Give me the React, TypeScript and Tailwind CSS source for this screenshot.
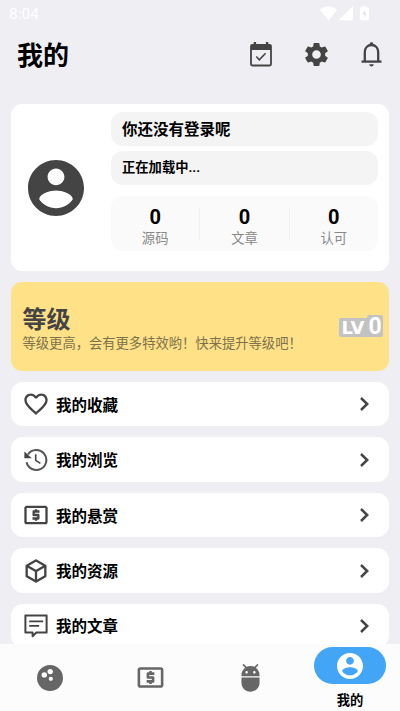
import type { ReactNode } from "react"
import { MdAdb, MdFavoriteBorder, MdOutlineLocalAtm, MdSettings } from "react-icons/md"

function AccountIcon({ className }: { className: string }) {
  return (
    <svg viewBox="2 2 20 20" fill="currentColor" className={className}>
      <path d="M12 2C6.48 2 2 6.48 2 12s4.48 10 10 10 10-4.48 10-10S17.52 2 12 2zm0 3c1.66 0 3 1.34 3 3s-1.34 3-3 3-3-1.34-3-3 1.34-3 3-3zm0 14.2c-2.5 0-4.71-1.28-6-3.22.03-1.99 4-3.08 6-3.08 1.99 0 5.97 1.09 6 3.08-1.29 1.94-3.5 3.22-6 3.22z" />
    </svg>
  )
}

function CalendarIcon() {
  return (
    <svg viewBox="0 0 22 25" className="h-[25px] w-[22px]" fill="none" stroke="currentColor">
      <path d="M4.9 0v4M17.1 0v4" strokeWidth="2.4" />
      <rect x="1" y="3" width="20" height="20.5" rx="1.2" strokeWidth="1.8" />
      <path d="M1 3h20v5H1z" fill="currentColor" stroke="none" />
      <path d="M6.3 14.6l3 3.2 6.3-6.6" strokeWidth="1.5" />
    </svg>
  )
}

function BellIcon() {
  return (
    <svg viewBox="0 0 21 25" className="h-[25px] w-[21px]" fill="none" stroke="currentColor" strokeWidth="2.3">
      <path d="M3.8 19.5V10.2C3.8 6 6.6 3 10.5 3s6.7 3 6.7 7.2v9.3" />
      <path d="M.5 19.6h20" />
      <path d="M8.8 3V1.6q0-1.4 1.7-1.4t1.7 1.4V3zM8.2 22.2h4.6q-.4 2.3-2.3 2.3t-2.3-2.3z" fill="currentColor" stroke="none" />
    </svg>
  )
}

function HistoryIcon() {
  return (
    <svg viewBox="0 0 24 24" className="size-6" fill="none" stroke="currentColor" strokeWidth="2.1">
      <path d="M2.6 14.2A10 10 0 1 0 4.1 6.3" className="opacity-90" />
      <path d="M.4 3.4v6.8h7.4z" fill="currentColor" stroke="none" />
      <path d="M11.7 6.3v6l4.7 3" strokeWidth="1.6" />
    </svg>
  )
}

function CubeIcon() {
  return (
    <svg viewBox="0 0 24 24" fill="currentColor" className="size-[28px]">
      <path d="M21 16.5c0 .38-.21.71-.53.88l-7.9 4.44c-.16.12-.36.18-.57.18s-.41-.06-.57-.18l-7.9-4.44A.991.991 0 0 1 3 16.5v-9c0-.38.21-.71.53-.88l7.9-4.44c.16-.12.36-.18.57-.18s.41.06.57.18l7.9 4.44c.32.17.53.5.53.88v9M12 4.15 6.04 7.5 12 10.85l5.96-3.35L12 4.15M5 15.91l6 3.38v-6.71L5 9.21v6.7m14 0v-6.7l-6 3.37v6.71l6-3.38Z" />
    </svg>
  )
}

function ArticleIcon() {
  return (
    <svg viewBox="0 0 24 24" className="size-6" fill="none" stroke="currentColor" strokeWidth="2">
      <path d="M1.4 1.6h21.2v17H12.4l-3.8 3.6v-3.6H1.4z" strokeLinejoin="round" />
      <path d="M5.2 7.4h14M5.2 11.8h10" strokeWidth="1.8" />
    </svg>
  )
}

function BowlingIcon() {
  return (
    <svg viewBox="0 0 26 26" className="size-[26px]">
      <circle cx="13" cy="13" r="13" fill="currentColor" />
      <circle cx="13.2" cy="6.6" r="2.7" fill="#fdfdfd" />
      <circle cx="7.3" cy="9.9" r="2.7" fill="#fdfdfd" />
      <circle cx="13.8" cy="13.8" r="2.1" fill="#fdfdfd" />
    </svg>
  )
}

function Chevron() {
  return (
    <svg viewBox="0 0 9 14" className="h-[14px] w-[9px]" fill="none" stroke="#444" strokeWidth="2.5">
      <path d="M1 1l6.2 6L1 13" />
    </svg>
  )
}

function StatusBar() {
  return (
    <div className="flex h-7 shrink-0 items-center justify-between pr-[31px] pl-[9px] text-white">
      <span className="pt-px font-[Roboto] text-[15.5px]">8:04</span>
      <svg viewBox="0 0 49 15" className="mb-px h-[15px] w-[49px]" fill="currentColor">
        <path d="M0 4Q8.5-3.5 17 4L8.5 14.5zM33 0v14.3H18.5zM42 1.2V0h4v1.2h1.6q1.4 0 1.4 1.4v10.3q0 1.4-1.4 1.4h-6.2q-1.4 0-1.4-1.4V2.6q0-1.4 1.4-1.4z" />
        <path d="M45 3.6l-3 4.8h2v3.5l3-5h-2z" fill="#e6e6ea" />
      </svg>
    </div>
  )
}

const stats = [
  { label: "源码", value: 0 },
  { label: "文章", value: 0 },
  { label: "认可", value: 0 },
]

const menu: { label: string; icon: ReactNode }[] = [
  { label: "我的收藏", icon: <MdFavoriteBorder size={28} /> },
  { label: "我的浏览", icon: <HistoryIcon /> },
  { label: "我的悬赏", icon: <MdOutlineLocalAtm size={28} /> },
  { label: "我的资源", icon: <CubeIcon /> },
  { label: "我的文章", icon: <ArticleIcon /> },
]

export default function App() {
  return (
    <div className="flex h-[711px] w-[400px] flex-col overflow-hidden bg-[#efeef3] font-['Noto_Sans_CJK_SC',sans-serif] text-black">
      <StatusBar />

      <header className="flex h-[76px] shrink-0 items-start justify-between pr-[18px] pl-[17px]">
        <h1 className="pt-[6px] text-[26px] leading-10 font-bold">我的</h1>
        <div className="flex items-center pt-3 text-[#444]">
          <CalendarIcon />
          <MdSettings size={29} className="ml-[30px]" />
          <span className="ml-[30px]">
            <BellIcon />
          </span>
        </div>
      </header>

      <main className="flex min-h-0 flex-1 flex-col gap-[11.1px] overflow-hidden px-[11px] pt-[0.4px]">
        <section className="flex h-[166.6px] shrink-0 rounded-[11px] bg-white pr-[11px]">
          <div className="flex w-[100px] items-center pl-[16.5px]">
            <AccountIcon className="size-14 text-[#444]" />
          </div>
          <div className="flex-1 pt-[8px]">
            <div className="flex h-[33.4px] items-center rounded-xl bg-[#f4f4f4] px-[11px] text-[15.5px] font-bold">
              你还没有登录呢
            </div>
            <div className="mt-[5.5px] flex h-[33.4px] items-center rounded-xl bg-[#f4f4f4] px-[11px] font-[Roboto,'Noto_Sans_CJK_SC',sans-serif] text-[13.3px] font-bold">
              正在加载中...
            </div>
            <div className="mt-[11px] flex h-[55.5px] items-center rounded-xl bg-[#fafafa]">
              {stats.map((stat, index) => (
                <div
                  key={stat.label}
                  className={`flex h-[33px] flex-1 flex-col items-center justify-center pt-[7px] ${index > 0 ? "border-l border-[#f0f0f0]" : ""}`}
                >
                  <span className="font-[Roboto] text-[20px] leading-[22px] font-bold">{stat.value}</span>
                  <span className="text-[13.3px] leading-5 text-[#888]">{stat.label}</span>
                </div>
              ))}
            </div>
          </div>
        </section>

        <section className="flex h-[88.8px] shrink-0 items-center justify-between rounded-[11px] bg-[#ffe187] pr-[6px] pl-[11.5px]">
          <div className="pt-[3px]">
            <h2 className="text-[24px] leading-[30px] font-bold text-[#444]">等级</h2>
            <p className="text-[13.3px] leading-5 whitespace-nowrap text-[#7c714c]">
              等级更高，会有更多特效哟！快来提升等级吧！
            </p>
          </div>
          <div className="flex items-end font-bold text-white">
            <span className="flex h-[19.5px] w-[28px] items-center justify-center rounded-l-[2px] bg-[#c2c2c2] font-['DejaVu_Sans',sans-serif] text-[18px] leading-none">
              LV
            </span>
            <span className="flex h-[22px] w-[16px] items-center justify-center rounded-r-[2px] rounded-tl-[2px] bg-[#c2c2c2] font-[Roboto] text-[23px] leading-none">
              0
            </span>
          </div>
        </section>

        {menu.map((item) => (
          <div
            key={item.label}
            className="flex h-[44.4px] shrink-0 items-center rounded-[12px] bg-white pr-[20px] pl-[11px]"
          >
            <span className="flex w-[28px] justify-center text-[#444]">{item.icon}</span>
            <span className="ml-[6px] flex-1 text-[15.5px] font-bold">{item.label}</span>
            <Chevron />
          </div>
        ))}
      </main>

      <nav className="grid h-[67px] shrink-0 grid-cols-4 items-center bg-[#fcfcfc] text-[#666]">
        <span className="flex justify-center">
          <BowlingIcon />
        </span>
        <span className="flex justify-center">
          <MdOutlineLocalAtm size={31} />
        </span>
        <span className="flex justify-center">
          <MdAdb size={31} />
        </span>
        <div className="flex h-full flex-col items-center pt-[3px]">
          <span className="flex h-[37px] w-[72px] items-center justify-center rounded-full bg-[#42a5f5]">
            <AccountIcon className="size-[26px] text-white" />
          </span>
          <span className="mt-[5.5px] text-[13.3px] leading-5 font-bold text-black">我的</span>
        </div>
      </nav>
    </div>
  )
}
